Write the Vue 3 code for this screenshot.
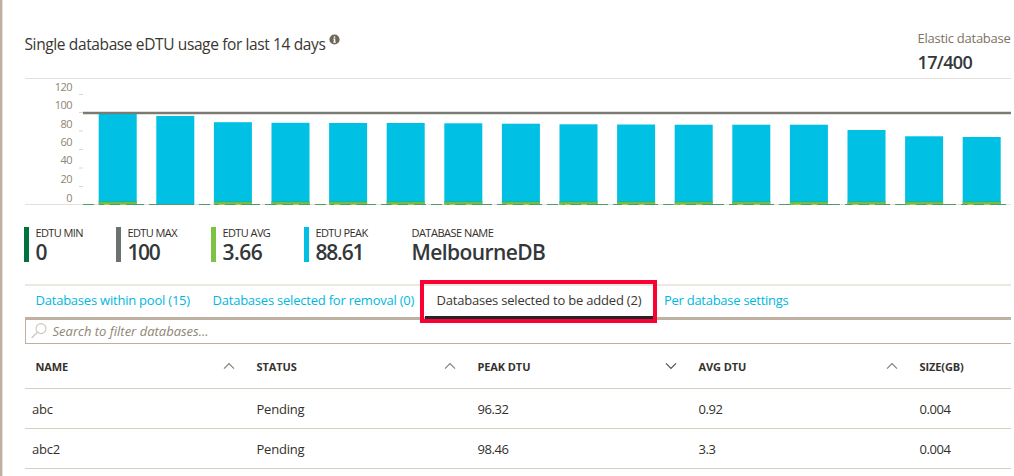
<script setup>
const axis = [
  { v: 120, y: 91, tick: 94.5 },
  { v: 100, y: 109, tick: 112.5 },
  { v: 80, y: 128, tick: 131 },
  { v: 60, y: 146, tick: 149.5 },
  { v: 40, y: 164, tick: 168 },
  { v: 20, y: 183, tick: 186.5 },
  { v: 0, y: 202, tick: null },
]
const bars = [114, 116, 122.2, 122.8, 123, 123, 123.3, 123.7, 124.3, 124.5, 124.7, 124.7, 124.7, 130, 136.3, 137]
  .map((top, i) => ({ x: 98.7 + i * 57.6, top, avg: i !== 1 }))

const stats = [
  { id: 'min', label: 'EDTU MIN', value: '0' },
  { id: 'max', label: 'EDTU MAX', value: '100' },
  { id: 'avg', label: 'EDTU AVG', value: '3.66' },
  { id: 'peak', label: 'EDTU PEAK', value: '88.61' },
  { id: 'name', label: 'DATABASE NAME', value: 'MelbourneDB' },
]
const tabs = [
  { id: 'pool', text: 'Databases within pool (15)' },
  { id: 'removal', text: 'Databases selected for removal (0)' },
  { id: 'added', text: 'Databases selected to be added (2)' },
  { id: 'settings', text: 'Per database settings' },
]
const columns = [
  { text: 'NAME', sort: 'up' },
  { text: 'STATUS', sort: 'up' },
  { text: 'PEAK DTU', sort: 'down' },
  { text: 'AVG DTU', sort: 'up' },
  { text: 'SIZE(GB)', sort: '' },
]
const rows = [
  ['abc', 'Pending', '96.32', '0.92', '0.004'],
  ['abc2', 'Pending', '98.46', '3.3', '0.004'],
]
</script>

<template>
  <div class="blade">
    <header class="head">
      <h1 class="title">Single database eDTU usage for last 14 days</h1>
      <svg class="info" width="11" height="11" viewBox="0 0 11 11">
        <circle cx="5.5" cy="5.5" r="5.1" fill="#6f675c" />
        <path d="M4.3 4.6h2v3.2h.6v.9H4.2v-.9h.6V5.5h-.5z" fill="#fff" />
        <circle cx="5.5" cy="3" r=".85" fill="#fff" />
      </svg>
      <div class="usage">
        <div class="usage-label">Elastic database</div>
        <div class="usage-value">17/400</div>
      </div>
    </header>

    <svg class="chart" width="986" height="127" viewBox="25 79 986 127">
      <g class="axis">
        <text v-for="a in axis" :key="a.v" x="72" :y="a.y" text-anchor="end">{{ a.v }}</text>
      </g>
      <template v-for="a in axis" :key="a.v">
        <rect v-if="a.tick" x="79" :y="a.tick - 0.5" width="4" height="1" fill="#ddd6cd" />
      </template>
      <rect x="25" y="204" width="986" height="1" fill="#e6e0da" />
      <g v-for="b in bars" :key="b.x">
        <rect :x="b.x" :y="b.top" width="38" :height="204.5 - b.top" fill="#00c0e4" />
        <rect v-if="b.avg" :x="b.x" y="201.3" width="38" height="1" fill="#1cb883" />
        <rect v-if="b.avg" :x="b.x" y="202.2" width="38" height="2.6" fill="#7dbd3b" />
      </g>
      <path d="M83 204.5H1006" stroke="#4f9b6b" stroke-dasharray="11 5 45 5 45 5" />
      <template v-for="b in bars" :key="b.x">
        <path
          v-if="b.avg"
          :d="`M${b.x + 5} 204.5h27`"
          stroke="#b3c94a"
          stroke-dasharray="6 10.5"
        />
      </template>
      <rect x="83" y="111" width="928" height="4" fill="#e3dfd8" />
      <rect x="83" y="112" width="928" height="2" fill="#7b7b76" />
      <rect :x="bars[0].x" y="114" width="38" height="1" fill="#12b4d4" />
    </svg>

    <section class="stats">
      <div v-for="s in stats" :key="s.id" class="stat" :class="s.id">
        <div class="stat-label">{{ s.label }}</div>
        <div class="stat-value">{{ s.value }}</div>
      </div>
    </section>

    <nav class="tabs">
      <a v-for="t in tabs" :key="t.id" class="tab" :class="t.id">{{ t.text }}</a>
    </nav>

    <div class="search">
      <svg class="glass" width="18" height="18" viewBox="0 0 18 18">
        <circle cx="11" cy="6.6" r="5" fill="none" stroke="#cfc6bb" stroke-width="1.1" />
        <path d="M7.4 10.2L1.6 16" stroke="#cfc6bb" stroke-width="1.3" fill="none" />
      </svg>
      <span class="placeholder">Search to filter databases...</span>
    </div>

    <div class="grid">
      <div class="row header">
        <div v-for="c in columns" :key="c.text" class="cell">
          <span>{{ c.text }}</span>
          <svg v-if="c.sort" class="sort" width="12" height="8" viewBox="0 0 12 8">
            <path v-if="c.sort === 'up'" d="M1 6.7L6 1.6L11 6.7" fill="none" stroke="#857c71" stroke-width="1.1" />
            <path v-else d="M1 1.3L6 6.4L11 1.3" fill="none" stroke="#554e45" stroke-width="1.2" />
          </svg>
        </div>
      </div>
      <div v-for="r in rows" :key="r[0]" class="row">
        <div v-for="(v, i) in r" :key="i" class="cell" :class="{ num: i > 1 }">{{ v }}</div>
      </div>
    </div>
  </div>
</template>

<style>
body {
  background: #fff;
}
</style>

<style scoped>
.blade {
  box-sizing: border-box;
  width: 1011px;
  height: 476px;
  overflow: hidden;
  padding-left: 22px;
  border-left: 2px solid #bfb0a3;
  box-shadow: inset 1px 0 #e6dfd9;
  font-family: "Open Sans", "Noto Sans", sans-serif;
  font-size: 13px;
  color: #33302b;
  white-space: nowrap;
}
.head {
  box-sizing: border-box;
  display: flex;
  height: 79px;
  margin-left: 0.5px;
  border-bottom: 1px solid #e6dfd8;
}
.title {
  margin: 34px 0 0;
  width: 304px;
  font-size: 15.5px;
  line-height: 20px;
  font-weight: 400;
  letter-spacing: -0.38px;
  color: #3a3631;
}
.info {
  margin-top: 33.5px;
}
.usage {
  margin: 29px 0 0 auto;
  width: 93.5px;
}
.usage-label {
  line-height: 18px;
  letter-spacing: -0.26px;
  color: #7d7264;
}
.usage-value {
  margin-top: 3px;
  font-size: 18px;
  line-height: 24px;
  font-weight: 600;
  letter-spacing: -0.66px;
  color: #33373a;
}
.chart {
  display: block;
  margin-left: 1px;
}
.axis {
  font-size: 11px;
  letter-spacing: -0.5px;
  fill: #8f8373;
}
.stats {
  display: flex;
  margin: 21px 0 0 0.4px;
  height: 57px;
}
.stat {
  box-sizing: border-box;
  height: 35px;
  padding-left: 6px;
  border-left: 5px solid;
}
.stat-label {
  font-size: 11px;
  line-height: 12px;
  letter-spacing: -0.58px;
  color: #332f29;
}
.stat-value {
  margin-top: 1px;
  font-size: 21px;
  line-height: 25px;
  font-weight: 600;
  letter-spacing: -0.8px;
  color: #33373a;
}
.stat.min { width: 92px; border-color: #00723f; }
.stat.max { width: 95px; border-color: #6b7271; }
.stat.avg { width: 93px; border-color: #7dc243; }
.stat.peak { width: 102px; border-color: #00bfe3; }
.stat.name { padding-left: 0; border-color: transparent; }
.stat.max .stat-value { letter-spacing: -1.3px; }
.stat.avg .stat-value { letter-spacing: -0.45px; }
.stat.peak .stat-value { letter-spacing: -1.16px; }
.stat.name .stat-label { letter-spacing: -0.48px; }
.stat.name .stat-value { letter-spacing: -0.57px; }
.tabs {
  position: relative;
  box-sizing: border-box;
  display: flex;
  height: 36px;
  margin-left: 1px;
  padding-left: 10.5px;
  border-top: 2px solid #ebe7e1;
  border-bottom: 3px solid #bfb1a1;
}
.tab {
  line-height: 28px;
  letter-spacing: -0.22px;
  color: #00b8de;
}
.tab.pool { width: 177px; }
.tab.removal { width: 207.5px; }
.tab.added {
  box-sizing: border-box;
  width: 237px;
  height: 43px;
  margin: -6px 7px 0 0;
  padding: 4px 0 0 12.5px;
  border: 4px solid #fb0032;
  background: linear-gradient(#22262a, #22262a) 1px 32px / 228px 3px no-repeat;
  line-height: 24px;
  letter-spacing: -0.2px;
  color: #3a3631;
  z-index: 1;
}
.tab.settings { letter-spacing: -0.27px; }
.search {
  box-sizing: border-box;
  display: flex;
  height: 24px;
  margin-left: 0.5px;
  border-left: 1px solid #bfb1a1;
  border-bottom: 1px solid #bfb1a1;
}
.glass {
  margin: 2px 0 0 4px;
}
.placeholder {
  margin-left: 5px;
  font-style: italic;
  line-height: 23px;
  color: #8f8474;
}
.grid {
  margin-left: 0.5px;
}
.row {
  box-sizing: border-box;
  display: grid;
  grid-template-columns: repeat(5, 221px);
  height: 40px;
  padding-left: 11px;
  border-bottom: 1px solid #d8cec1;
}
.cell {
  display: flex;
  line-height: 41px;
  letter-spacing: -0.2px;
}
.cell.num {
  letter-spacing: -0.43px;
}
.row:not(.header) .cell:first-child {
  margin-left: -3.5px;
}
.header {
  height: 45px;
}
.header .cell {
  justify-content: space-between;
  font-size: 11px;
  line-height: 46px;
  font-weight: 700;
  letter-spacing: -0.1px;
  color: #35322e;
}
.sort {
  margin: 17.5px 21.5px 0 0;
}
</style>
